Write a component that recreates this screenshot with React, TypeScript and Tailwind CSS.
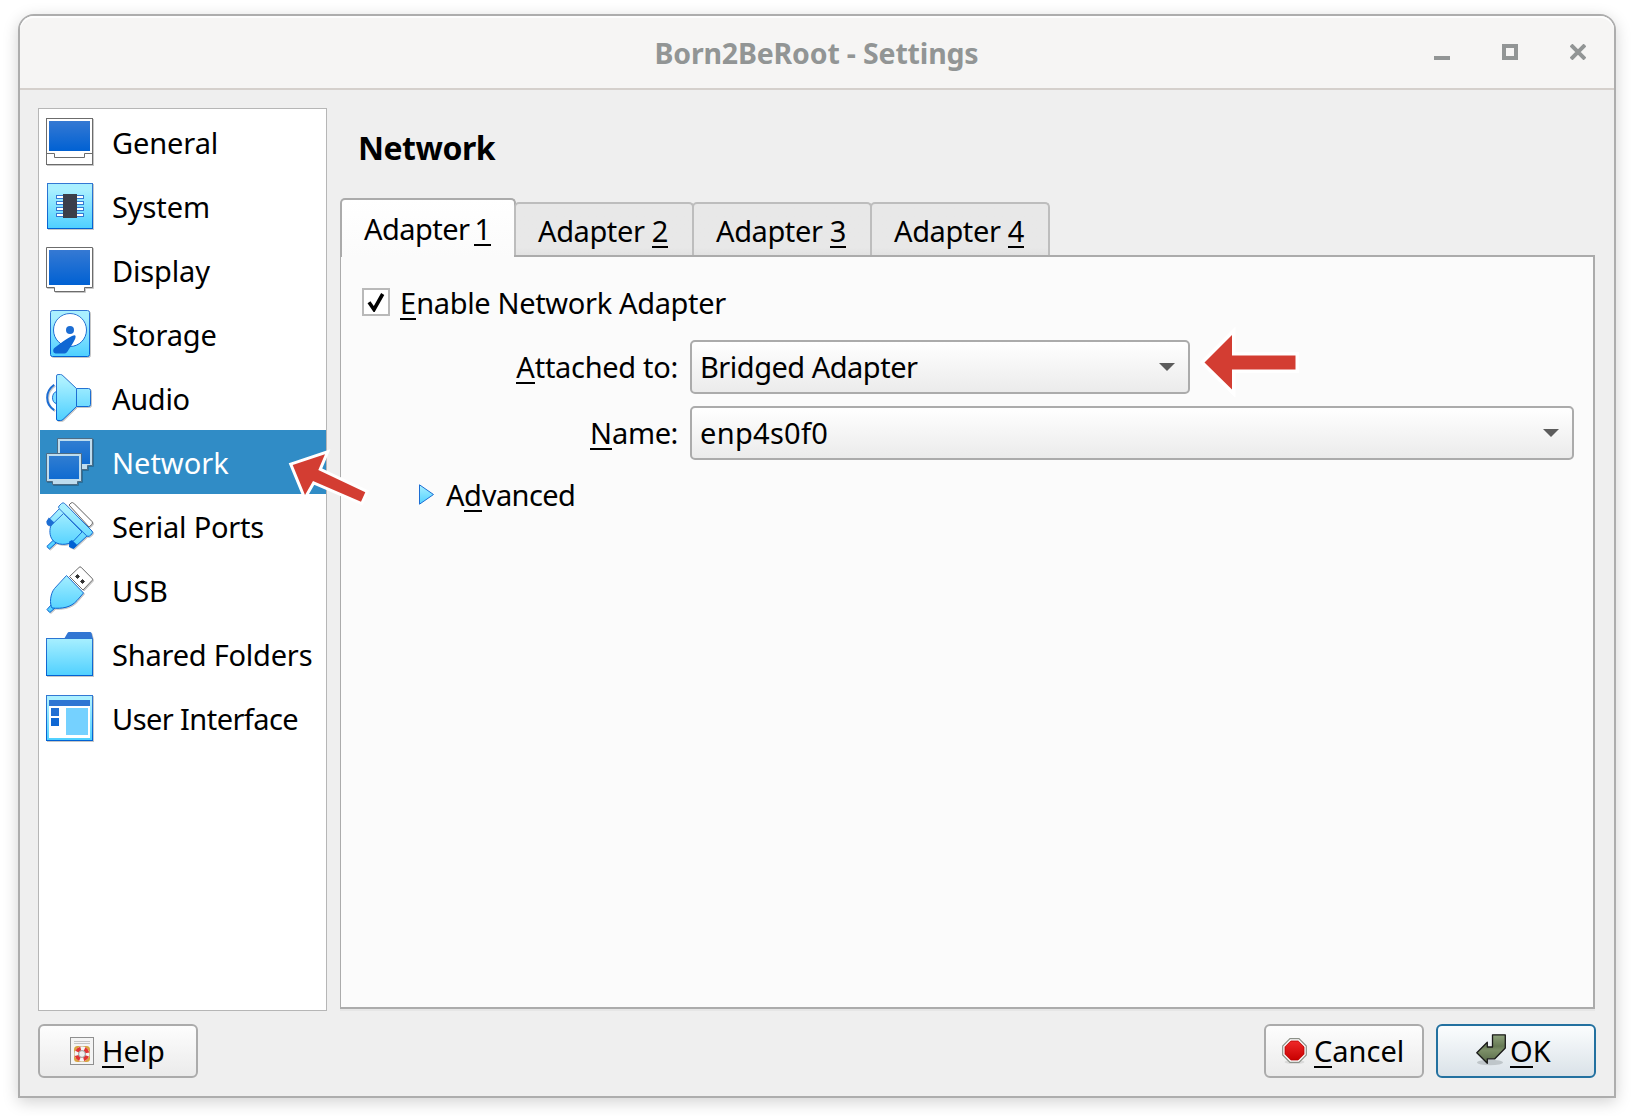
import type { ReactNode } from "react";

function Key({ children }: { children: ReactNode }) {
  return (
    <span className="relative tracking-normal after:absolute after:bottom-[2.5px] after:left-0 after:h-[2px] after:w-full after:bg-black after:content-['']">
      <span>{children}</span>
    </span>
  );
}

function Icon({ children }: { children: ReactNode }) {
  return (
    <svg
      viewBox="0 0 48 48"
      className="h-12 w-12 shrink-0 overflow-visible [filter:drop-shadow(1px_1px_0px_rgba(0,0,0,0.22))]"
      fill="none"
      strokeWidth="1"
    >
      {children}
    </svg>
  );
}

function IconDefs() {
  return (
    <svg className="absolute h-0 w-0">
      <defs>
        <linearGradient id="sky" gradientUnits="userSpaceOnUse" x1="0" y1="3" x2="0" y2="46">
          <stop offset="0.1" stopColor="#aaf0ff" />
          <stop offset="1" stopColor="#4fd0ff" />
        </linearGradient>
        <linearGradient id="skyBox" x1="0" y1="0" x2="0" y2="1">
          <stop offset="0" stopColor="#aaf0ff" />
          <stop offset="1" stopColor="#4fd0ff" />
        </linearGradient>
        <linearGradient id="blue" x1="0" y1="0" x2="0" y2="1">
          <stop offset="0" stopColor="#3579d3" />
          <stop offset="1" stopColor="#0061d3" />
        </linearGradient>
        <linearGradient id="blueSelected" x1="0" y1="0" x2="0" y2="1">
          <stop offset="0" stopColor="#307dd1" />
          <stop offset="1" stopColor="#0f6bd1" />
        </linearGradient>
        <linearGradient id="edge" gradientUnits="userSpaceOnUse" x1="0" y1="0" x2="0" y2="48">
          <stop offset="0" stopColor="#3579d3" />
          <stop offset="1" stopColor="#0061d3" />
        </linearGradient>
      </defs>
    </svg>
  );
}

const general = (
  <Icon>
    <rect x=".5" y=".5" width="46" height="46" fill="#fff" stroke="#6c6c6c" />
    <rect x="3" y="3" width="41" height="30" fill="url(#blue)" />
    <path d="M.5 35.5H8.5V39.5H38.5V35.5H46.5" stroke="#6c6c6c" />
  </Icon>
);

const system = (
  <Icon>
    <rect x="1.5" y="1.5" width="45" height="45" fill="url(#sky)" stroke="url(#edge)" />
    <g fill="#fff" stroke="#3579d3">
      <rect x="10.5" y="13.5" width="27" height="3" />
      <rect x="10.5" y="19.5" width="27" height="3" />
      <rect x="10.5" y="25.5" width="27" height="3" />
      <rect x="10.5" y="31.5" width="27" height="3" />
    </g>
    <rect x="17" y="12" width="14" height="24" fill="#3b3e49" />
  </Icon>
);

const display = (
  <Icon>
    <path d="M.5 1.5H46.5V41.5H38.5V45.5H8.5V41.5H.5Z" fill="#fff" stroke="#6c6c6c" />
    <rect x="3" y="4" width="41" height="35" fill="url(#blue)" />
  </Icon>
);

const storage = (
  <Icon>
    <rect x="4.5" y=".5" width="39" height="46" rx="2" fill="url(#sky)" stroke="url(#edge)" />
    <circle cx="24" cy="20" r="16.5" fill="#fff" stroke="url(#edge)" />
    <circle cx="24" cy="20" r="4" fill="#1c6dd3" />
    <path
      d="M29.6 26.2C29.8 29 27 33 21.5 41.5C20.5 43.2 19 43.5 17 43.5H9.5Q7.3 43.2 7.3 41.5C7 39.5 7.5 38.5 9 37.5C16 32 24 26.5 27.5 25.5Q29.3 25 29.6 26.2Z"
      fill="#0f67d3"
    />
  </Icon>
);

const audio = (
  <Icon>
    <path d="M8.2 10.8C-1.2 17.5-1.2 30 8.2 36.2" stroke="#1c6dd3" strokeWidth="2" />
    <path d="M10.5 17.5C5.2 18.8 5.2 29 10.5 29.5Z" fill="#7fe0ff" stroke="url(#edge)" />
    <path d="M10.5 2Q10.5.5 12 .5H14.5Q16 .5 17 1.8L30.5 14.5V32.5L17 45.5Q16 46.5 14.5 46.5H12Q10.5 46.5 10.5 45Z" fill="url(#sky)" stroke="url(#edge)" />
    <path d="M30.5 14.5H42.5Q44.5 14.5 44.5 16.5V30.5Q44.5 32.5 42.5 32.5H30.5Z" fill="url(#sky)" stroke="url(#edge)" />
  </Icon>
);

const network = (
  <Icon>
    <path d="M11.5 .5H46.5V27.5H41.5V31.5H15.5V27.5H11.5Z" fill="#bedcee" stroke="#4d6c85" />
    <rect x="14" y="3" width="30" height="23" fill="url(#blueSelected)" />
    <path d="M.5 15.5H35.5V43.5H31.5V46.5H6.5V43.5H.5Z" fill="#bedcee" stroke="#4d6c85" />
    <rect x="3" y="18" width="30" height="23" fill="url(#blueSelected)" />
  </Icon>
);

const serial = (
  <Icon>
    <path d="M23 3L25 1Q26.3 0 27.7 1.2L46 19.5Q47 21 46 22.3L43 25Z" fill="#fff" stroke="#6c6c6c" />
    <g fill="url(#sky)" stroke="url(#edge)">
      <path d="M14 6L19.5 11.5L6 24L1.5 19Z" />
      <path d="M36 28L41.5 33.5L28 46L23 41Z" />
      <path d="M8 37.5L.8 44.5L3.5 47L10.5 40.5Z" />
      <path d="M17.5 11.5L36 30L27.5 39C21 44 11 43 7 38.5C3 34 3.5 27 5 23.5Z" />
      <path d="M15.5 1.5Q17 0 18.7 1.5L46 29Q47.2 30.5 46 31.8L43.5 34Q42 35 40.5 33.7L13 6.5Q12 5 13 4Z" />
    </g>
    <path d="M.3 19.5L2.8 15.6L8.3 20.5L5 24Q.5 24.5 .3 19.5Z" fill="#1c6dd3" />
    <path d="M23.2 39.5L26 38L31.2 43L27.5 47L23 45Z" fill="#0061d3" />
  </Icon>
);

const usb = (
  <Icon>
    <path d="M33 1.5Q34 .2 35 1.2L46 12.3Q47 13.5 46 14.5L37 24L23.5 10.5Z" fill="#fff" stroke="#6c6c6c" />
    <path d="M31.5 8.5L33.5 10.5L31.5 12.5L29.5 10.5Z M36.5 13.5L38.5 15.5L36.5 17.5L34.5 15.5Z" fill="#333" stroke="#333" />
    <path d="M5.5 38.5L1 43.5L3.8 46.5L9 42Z" fill="url(#sky)" stroke="url(#edge)" />
    <path d="M20.5 9.5L37.5 27L31 34.5C25 41.5 16 43 6 42C3.5 38 4 28 8.5 22.5Z" fill="url(#sky)" stroke="url(#edge)" />
  </Icon>
);

const folder = (
  <Icon>
    <path d="M18 9L21.5 3Q22 2 23 2H44Q45.2 2 45.5 3L47 9Z" fill="#3176d3" />
    <rect x=".5" y="8.5" width="46" height="37" fill="url(#sky)" stroke="url(#edge)" />
  </Icon>
);

const userInterface = (
  <Icon>
    <rect x=".5" y="1.5" width="46" height="45" fill="url(#sky)" stroke="url(#edge)" />
    <rect x="3" y="6" width="41" height="38" fill="#fff" />
    <rect x="3" y="6" width="41" height="6" fill="#2e75d3" />
    <rect x="5" y="14" width="8" height="8" fill="#226fd3" />
    <rect x="5" y="24" width="8" height="8" fill="#0f67d3" />
    <rect x="20" y="14" width="22" height="27" fill="#75d1ff" />
  </Icon>
);

const items = [
  { label: "General", icon: general, tracking: "tracking-[-0.1px]" },
  { label: "System", icon: system, tracking: "tracking-[-0.1px]" },
  { label: "Display", icon: display, tracking: "tracking-[-0.15px]" },
  { label: "Storage", icon: storage, tracking: "tracking-[-0.15px]" },
  { label: "Audio", icon: audio, tracking: "tracking-[-0.3px]" },
  { label: "Network", icon: network, tracking: "tracking-normal", active: true },
  { label: "Serial Ports", icon: serial, tracking: "tracking-[-0.2px]" },
  { label: "USB", icon: usb, tracking: "tracking-normal" },
  { label: "Shared Folders", icon: folder, tracking: "tracking-[-0.22px]" },
  { label: "User Interface", icon: userInterface, tracking: "tracking-[-0.57px]" },
];

function TitleBar() {
  return (
    <header className="relative flex h-[74px] shrink-0 items-center justify-center rounded-t-[14px] border-b-2 border-[#d5d0cc] bg-[#f6f5f4] shadow-[inset_0_2px_0_#fdfdfd]">
      <h1 className="pt-px pr-px text-[28.5px] font-bold leading-[40px] tracking-[-0.17px] text-[#929595]">Born2BeRoot - Settings</h1>
      <div className="absolute right-[28px] top-[28px] flex gap-[52px]">
        <svg viewBox="0 0 16 16" className="h-4 w-4"><path d="M0 12H16V16H0Z" fill="#929595" /></svg>
        <svg viewBox="0 0 16 16" className="h-4 w-4"><path d="M2 2H14V14H2Z" fill="none" stroke="#929595" strokeWidth="4" /></svg>
        <svg viewBox="0 0 16 16" className="h-4 w-4"><path d="M1 1L15 15M15 1L1 15" fill="none" stroke="#929595" strokeWidth="4" /></svg>
      </div>
    </header>
  );
}

function Sidebar() {
  return (
    <nav className="relative z-20 w-[289px] shrink-0 border border-[#b6b6b6] bg-white pl-px pt-px">
      {items.map((item) => (
        <div
          key={item.label}
          className={`flex h-16 items-center pl-[6px] ${item.active ? "bg-[#308cc6] text-white" : ""}`}
        >
          {item.icon}
          <span className={`ml-[18px] whitespace-nowrap pt-[2px] ${item.tracking}`}>{item.label}</span>
        </div>
      ))}
      <svg viewBox="0 0 90 60" className="absolute left-[246px] top-[337px] h-[60px] w-[90px]">
        <path d="M7.7 19L40 8.3L33.3 24L80.3 46.3L76 55.7L28 35L20 49Z" fill="#fff" stroke="#fff" strokeWidth="6" />
        <path d="M7.7 19L40 8.3L33.3 24L80.3 46.3L76 55.7L28 35L20 49Z" fill="#d33d32" />
      </svg>
    </nav>
  );
}

function Tabs() {
  return (
    <div className="relative z-10 -mb-[2px] flex h-[59px] items-end">
      <div className="flex h-[59px] w-[176px] rounded-t-[5px] border-2 border-b-0 border-[#ababab] bg-gradient-to-b from-white to-[#fbfbfb] pl-[22px] leading-[58px]">
        <span className="whitespace-pre tracking-[-0.55px]">Adapter </span>
        <span className="-ml-[2px]"><Key>1</Key></span>
      </div>
      {[2, 3, 4].map((n) => (
        <div
          key={n}
          className="mb-[2px] -ml-[2px] flex h-[53px] w-[180px] rounded-t-[5px] border-2 border-b-0 border-[#bdbdbd] bg-gradient-to-b from-[#e8e8e8] from-85% to-[#e2e2e2] pl-[22px] leading-[54px]"
        >
          <span className="whitespace-pre tracking-[-0.4px]">Adapter </span>
          <span><Key>{n}</Key></span>
        </div>
      ))}
    </div>
  );
}

function Select({ value, width, tracking }: { value: string; width: string; tracking: string }) {
  return (
    <div className={`flex h-[54px] items-center justify-between rounded-[5px] border-2 border-[#ababab] bg-gradient-to-b from-white to-[#ebebeb] pl-2 pr-[13px] ${width}`}>
      <span className={tracking}>{value}</span>
      <svg viewBox="0 0 16 8" className="h-2 w-4"><path d="M0 0H16L8 8Z" fill="#5c5c5c" /></svg>
    </div>
  );
}

function NetworkPanel() {
  return (
    <div className="relative flex-1 border border-b-2 border-r-2 border-t-2 border-[#ababab] bg-[#fbfbfb] shadow-[0_2px_0_#e6e6e6]">
      <div className="mt-[28px] flex h-[36px] items-center pl-[21px]">
        <div className="-mt-[2px] flex h-7 w-7 items-center justify-center border-2 border-[#b9b9b9] bg-white">
          <svg viewBox="0 0 20 20" className="h-5 w-5"><path d="M3 10.3L8 17.5L16.7 2" fill="none" stroke="#000" strokeWidth="3.6" /></svg>
        </div>
        <span className="ml-[10px] tracking-[-0.34px]"><Key>E</Key>nable Network Adapter</span>
      </div>
      <div className="mt-[19px] flex items-center">
        <span className="mr-3 w-[337px] text-right tracking-[-0.3px]"><Key>A</Key>ttached to:</span>
        <Select value="Bridged Adapter" width="w-[500px]" tracking="tracking-[-0.5px]" />
      </div>
      <div className="mt-3 flex items-center">
        <span className="mr-3 w-[337px] text-right tracking-[-0.4px]"><Key>N</Key>ame:</span>
        <Select value="enp4s0f0" width="w-[884px]" tracking="tracking-[0.3px]" />
      </div>
      <div className="mt-[14px] flex h-[42px] items-center pl-[77px]">
        <svg viewBox="0 0 17 21" className="-mt-px h-[21px] w-[17px]"><path d="M1.5 .8L15.5 10.5L1.5 20.2Z" fill="url(#skyBox)" stroke="#1c6dd3" /></svg>
        <span className="ml-[11px] tracking-[-0.6px]">A<Key>d</Key>vanced</span>
      </div>
      <svg viewBox="0 0 104 70" className="absolute left-[859px] top-[70px] h-[70px] w-[104px]">
        <path d="M4.5 35.5L32 8V28.5H95.5V42.5H32V62.5Z" fill="#fff" stroke="#fff" strokeWidth="7" />
        <path d="M4.5 35.5L32 8V28.5H95.5V42.5H32V62.5Z" fill="#d33d32" />
      </svg>
    </div>
  );
}

function HelpIcon() {
  return (
    <svg viewBox="0 0 24 28" className="h-7 w-6">
      <rect x=".5" y=".5" width="23" height="27" fill="#f4f4f4" stroke="#8f8f8f" />
      <path d="M4 4.5H20M4 6.5H20" stroke="#c4c4c4" />
      <rect x="4" y="9" width="16" height="16" rx="3.5" fill="#d9a441" />
      <path d="M9 9.5H15V24.5H9ZM4.5 14H19.5V20H4.5Z" fill="#b9b9b9" />
      <circle cx="12" cy="17" r="5.5" fill="none" stroke="#f5f5f5" strokeWidth="4" />
      <circle cx="12" cy="17" r="5.5" fill="none" stroke="#e23434" strokeWidth="4" strokeDasharray="4.7 3.94" strokeDashoffset="-1.97" />
      <circle cx="12" cy="17" r="3.4" fill="#f1f1f1" stroke="#888" strokeWidth=".8" />
    </svg>
  );
}

function CancelIcon() {
  return (
    <svg viewBox="0 0 25 26" className="h-[26px] w-[25px]">
      <ellipse cx="12.5" cy="24" rx="10" ry="2" fill="#dadada" />
      <path d="M8 .7H17L24.3 8V17L17 24.3H8L.7 17V8Z" fill="#fff" stroke="#8c9088" strokeWidth="1.2" />
      <path d="M8.8 3H16.2L22 8.8V16.2L16.2 22H8.8L3 16.2V8.8Z" fill="url(#stop)" stroke="#b80000" strokeWidth=".8" />
      <defs>
        <linearGradient id="stop" x1="0" y1="0" x2="0" y2="1"><stop stopColor="#ef2929" /><stop offset="1" stopColor="#c80000" /></linearGradient>
      </defs>
    </svg>
  );
}

function OkIcon() {
  return (
    <svg viewBox="0 0 32 32" className="-mt-[3px] h-8 w-8">
      <ellipse cx="14" cy="28.5" rx="13" ry="2.8" fill="#bfc6ca" />
      <path d="M16.5 .8H29.3V14L18.8 24.8H11.3V29.3L.8 18.8L11.3 8.2V13H16.5Z" fill="url(#apply)" stroke="#1a1a1a" strokeWidth="1.3" strokeLinejoin="round" />
      <defs>
        <linearGradient id="apply" x1="0" y1="0" x2="0" y2="1"><stop stopColor="#8fa37c" /><stop offset=".4" stopColor="#677a55" /><stop offset=".55" stopColor="#7c8f68" /><stop offset="1" stopColor="#566846" /></linearGradient>
      </defs>
    </svg>
  );
}

function Footer() {
  const base = "flex h-[54px] w-40 items-center rounded-[6px] border-2 bg-gradient-to-b";
  return (
    <footer className="flex gap-3 pl-[18px] pt-[13px]">
      <button className={`${base} border-[#ababab] from-[#fdfdfd] to-[#ebebeb] pl-[30px]`}>
        <HelpIcon />
        <span className="ml-[8px] tracking-[-0.2px]"><Key>H</Key>elp</span>
      </button>
      <button className={`${base} ml-auto border-[#ababab] from-[#fdfdfd] to-[#ebebeb] pl-4`}>
        <CancelIcon />
        <span className="ml-[7px]"><Key>C</Key>ancel</span>
      </button>
      <button className={`${base} mr-[18px] border-[#2371a0] from-[#fbfdfe] to-[#dae2e8] pl-[38px]`}>
        <OkIcon />
        <span className="ml-[2px]"><Key>O</Key>K</span>
      </button>
    </footer>
  );
}

export default function App() {
  return (
    <div className="h-[1116px] w-[1634px] overflow-hidden bg-white pl-[18px] pt-[14px] font-['Noto_Sans',sans-serif] text-[29px] leading-[36px] text-black">
      <IconDefs />
      <main className="flex h-[1084px] w-[1598px] flex-col rounded-t-[16px] border-2 border-[#adadad] bg-[#efefef] shadow-[0_4px_16px_rgba(0,0,0,0.18)]">
        <TitleBar />
        <div className="flex h-[921px] shrink-0 pl-[18px] pt-[18px]">
          <div className="flex h-[903px]"><Sidebar /></div>
          <section className="ml-[13px] flex h-[901px] w-[1255px] flex-col">
            <h2 className="mb-[21px] ml-[18px] mt-[20px] h-[49px] text-[32px] font-bold leading-[40px] tracking-[-0.5px]">Network</h2>
            <Tabs />
            <NetworkPanel />
          </section>
        </div>
        <Footer />
      </main>
    </div>
  );
}
